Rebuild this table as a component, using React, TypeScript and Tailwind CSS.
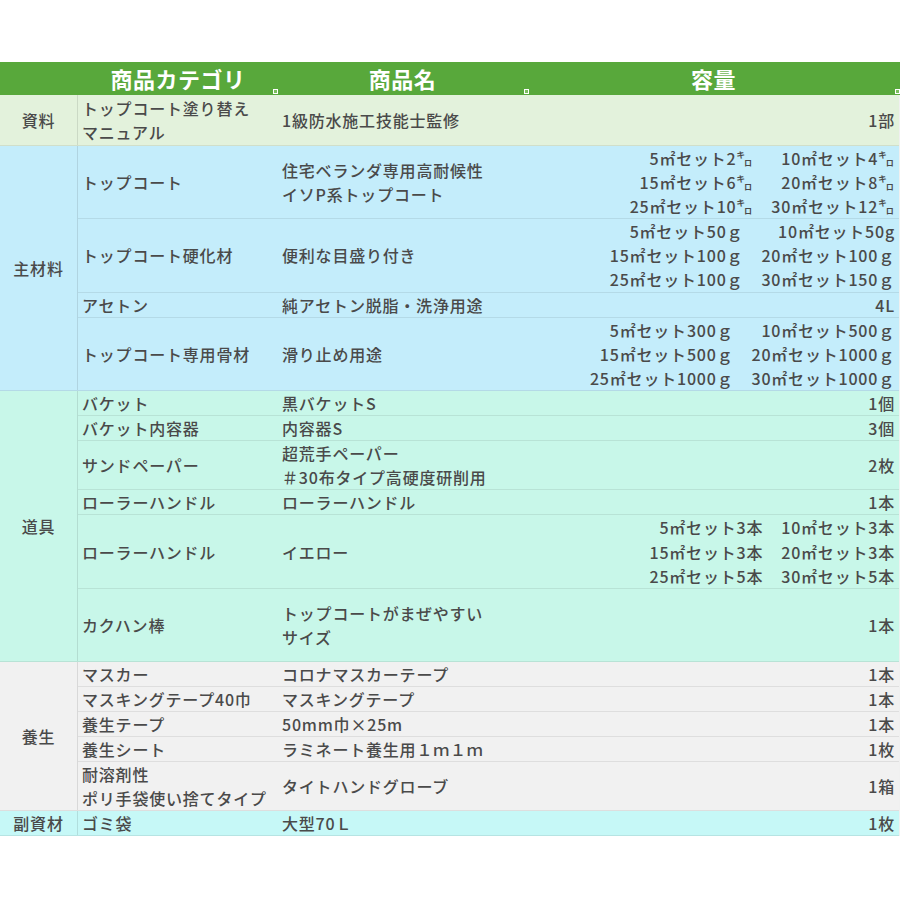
type Row = {
  cat: string[];
  name: string[];
  qty?: string;
  sets?: [string, string][];
  minH?: string;
};

type Group = {
  label: string;
  bg: string;
  rows: Row[];
};

const groups: Group[] = [
  {
    label: "資料",
    bg: "bg-[#e3f2dc]",
    rows: [
      { cat: ["トップコート塗り替え", "マニュアル"], name: ["1級防水施工技能士監修"], qty: "1部", minH: "min-h-[50px]" },
    ],
  },
  {
    label: "主材料",
    bg: "bg-[#c4edfb]",
    rows: [
      {
        cat: ["トップコート"],
        name: ["住宅ベランダ専用高耐候性", "イソP系トップコート"],
        sets: [
          ["5㎡セット2㌔", "10㎡セット4㌔"],
          ["15㎡セット6㌔", "20㎡セット8㌔"],
          ["25㎡セット10㌔", "30㎡セット12㌔"],
        ],
      },
      {
        cat: ["トップコート硬化材"],
        name: ["便利な目盛り付き"],
        sets: [
          ["5㎡セット50ｇ", "10㎡セット50g"],
          ["15㎡セット100ｇ", "20㎡セット100ｇ"],
          ["25㎡セット100ｇ", "30㎡セット150ｇ"],
        ],
      },
      { cat: ["アセトン"], name: ["純アセトン脱脂・洗浄用途"], qty: "4L" },
      {
        cat: ["トップコート専用骨材"],
        name: ["滑り止め用途"],
        sets: [
          ["5㎡セット300ｇ", "10㎡セット500ｇ"],
          ["15㎡セット500ｇ", "20㎡セット1000ｇ"],
          ["25㎡セット1000ｇ", "30㎡セット1000ｇ"],
        ],
      },
    ],
  },
  {
    label: "道具",
    bg: "bg-[#c8f7e9]",
    rows: [
      { cat: ["バケット"], name: ["黒バケットS"], qty: "1個" },
      { cat: ["バケット内容器"], name: ["内容器S"], qty: "3個" },
      { cat: ["サンドペーパー"], name: ["超荒手ペーパー", "＃30布タイプ高硬度研削用"], qty: "2枚" },
      { cat: ["ローラーハンドル"], name: ["ローラーハンドル"], qty: "1本" },
      {
        cat: ["ローラーハンドル"],
        name: ["イエロー"],
        sets: [
          ["5㎡セット3本", "10㎡セット3本"],
          ["15㎡セット3本", "20㎡セット3本"],
          ["25㎡セット5本", "30㎡セット5本"],
        ],
      },
      { cat: ["カクハン棒"], name: ["トップコートがまぜやすい", "サイズ"], qty: "1本", minH: "min-h-[72px]" },
    ],
  },
  {
    label: "養生",
    bg: "bg-[#f1f1f1]",
    rows: [
      { cat: ["マスカー"], name: ["コロナマスカーテープ"], qty: "1本" },
      { cat: ["マスキングテープ40巾"], name: ["マスキングテープ"], qty: "1本" },
      { cat: ["養生テープ"], name: ["50mm巾×25m"], qty: "1本" },
      { cat: ["養生シート"], name: ["ラミネート養生用１ｍ１ｍ"], qty: "1枚" },
      { cat: ["耐溶剤性", "ポリ手袋使い捨てタイプ"], name: ["タイトハンドグローブ"], qty: "1箱" },
    ],
  },
  {
    label: "副資材",
    bg: "bg-[#c6f8f7]",
    rows: [{ cat: ["ゴミ袋"], name: ["大型70Ｌ"], qty: "1枚" }],
  },
];

function Lines({ items }: { items: string[] }) {
  return (
    <div>
      {items.map((t, i) => (
        <div key={i} className="whitespace-nowrap">
          {t}
        </div>
      ))}
    </div>
  );
}

function Handle({ className }: { className: string }) {
  return <span className={`absolute top-[27px] w-[5px] h-[5px] border border-white bg-[#7cbf5f] ${className}`} />;
}

export default function App() {
  return (
    <div
      className="w-[900px] bg-white pt-[62px] pb-[63px] text-[#4a4a4a]"
      style={{ fontFamily: '"Noto Sans CJK JP", "Noto Sans", sans-serif' }}
    >
      {/* 見出し */}
      <div className="relative grid grid-cols-[78px_200px_249px_1fr] h-[33px] bg-[#58a83b] text-white text-[22px] font-bold tracking-[0.5px] leading-[33px]">
        <div />
        <div className="text-center">商品カテゴリ</div>
        <div className="text-center">商品名</div>
        <div className="text-center">容量</div>
        <Handle className="left-[273px]" />
        <Handle className="left-[524px]" />
        <Handle className="right-0" />
      </div>

      <div className="text-[16px] leading-[24.1px] tracking-[0.8px] font-medium border-r border-black/[0.06]">
        {groups.map((g, gi) => (
          <div key={gi} className={`flex ${g.bg} border-b border-black/[0.08]`}>
            <div className="w-[78px] shrink-0 flex items-center justify-center border-r border-black/[0.1]">
              {g.label}
            </div>
            <div className="flex-1">
              {g.rows.map((r, ri) => (
                <div
                  key={ri}
                  className={`grid grid-cols-[200px_249px_1fr] items-center ${
                    ri < g.rows.length - 1 ? "border-b border-black/[0.08]" : ""
                  } ${r.minH ?? ""}`}
                >
                  <div className="pl-1">
                    <Lines items={r.cat} />
                  </div>
                  <div className="pl-1">
                    <Lines items={r.name} />
                  </div>
                  <div className="pr-1 text-right">
                    {r.sets ? (
                      <div className="grid grid-cols-[auto_auto] gap-x-[18px] justify-end">
                        {r.sets.flat().map((s, si) => (
                          <div key={si} className="text-right whitespace-nowrap">
                            {s}
                          </div>
                        ))}
                      </div>
                    ) : (
                      <div>{r.qty}</div>
                    )}
                  </div>
                </div>
              ))}
            </div>
          </div>
        ))}
      </div>
    </div>
  );
}
